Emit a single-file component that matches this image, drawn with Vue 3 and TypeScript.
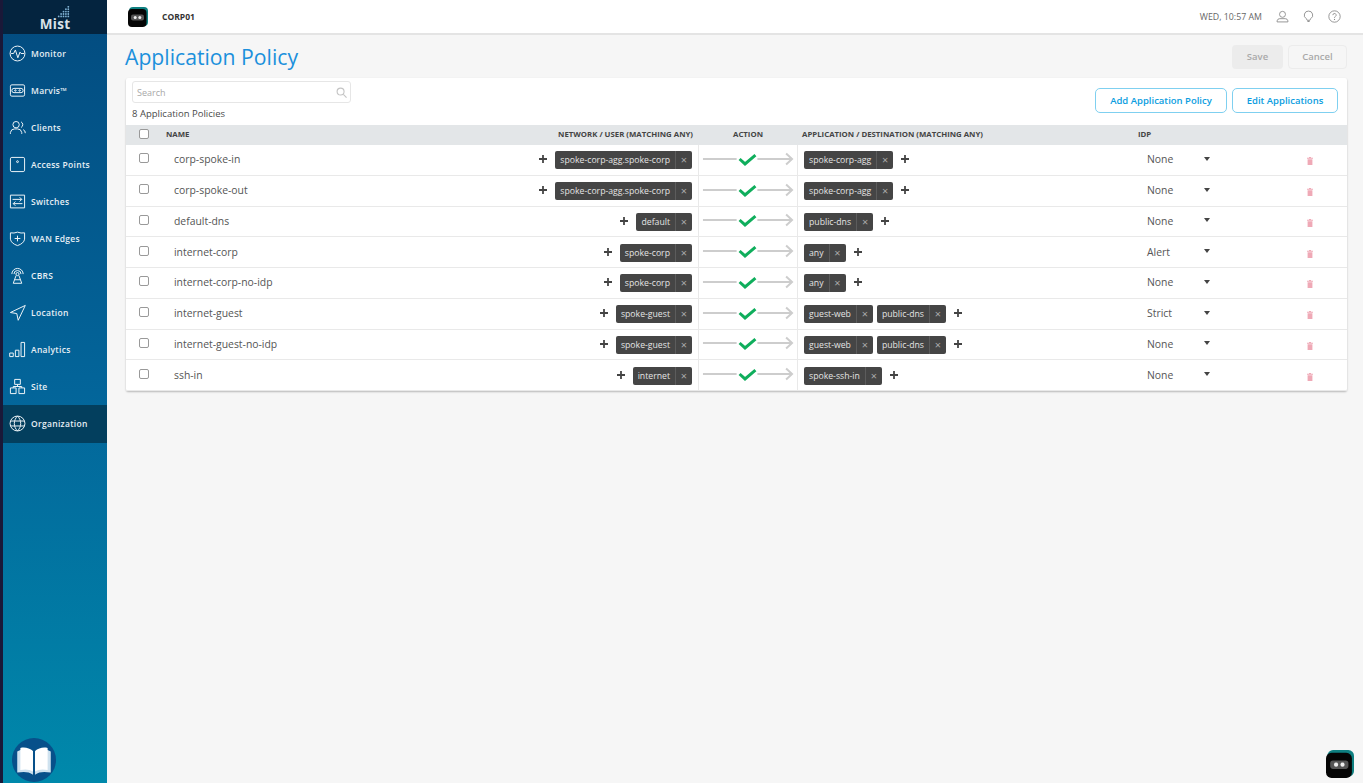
<script setup lang="ts">
interface NavItem { label: string; paths: string[]; active?: boolean }
interface Policy { name: string; net: string[]; app: string[]; idp: string }

const c = (x: number, y: number, r: number) =>
  `M${x - r} ${y}a${r} ${r} 0 1 0 ${2 * r} 0a${r} ${r} 0 1 0 ${-2 * r} 0`

const nav: NavItem[] = [
  { label: 'Monitor', paths: [c(12, 12, 10.5), 'M3 12h3.500l2.500-5 3.500 11 3-8 1.500 2h4.500'] },
  { label: 'Marvis™', paths: ['M4 4h16a2 2 0 0 1 2 2v12a2 2 0 0 1-2 2H4a2 2 0 0 1-2-2V6a2 2 0 0 1 2-2z', 'M7 9h10a3 3 0 0 1 0 6H7a3 3 0 0 1 0-6z', c(9, 12, 1), c(15, 12, 1)] },
  { label: 'Clients', paths: [c(10, 8, 4.5), 'M2 21v-2a6 6 0 0 1 6-5h4a6 6 0 0 1 6 5v2', 'M17 4a4.500 4.500 0 0 1 0 8', 'M20 15a5 5 0 0 1 3 5'] },
  { label: 'Access Points', paths: ['M4 2h16a2 2 0 0 1 2 2v16a2 2 0 0 1-2 2H4a2 2 0 0 1-2-2V4a2 2 0 0 1 2-2z', c(12, 8, 1.3)] },
  { label: 'Switches', paths: ['M2 3h20v18H2z', 'M5 9h13M15 6l3 3-3 3', 'M19 15H6M9 12l-3 3 3 3'] },
  { label: 'WAN Edges', paths: ['M2 4q5 1 10-1 5 2 10 1v9q-1 6-10 9-9-3-10-9z', 'M12 8v8M8 12h8'] },
  { label: 'CBRS', paths: ['M10 12L6 23h12l-4-11', 'M8 18h8', c(12, 10, 2.2), 'M7 10a5 5 0 0 1 10 0', 'M4 10a8 8 0 0 1 16 0'] },
  { label: 'Location', paths: ['M23 2L2 12l9 1.500L13 23z'] },
  { label: 'Analytics', paths: ['M1 17h5v5H1z', 'M9 13h5v9H9z', 'M17 2h5v20h-5z'] },
  { label: 'Site', paths: ['M8 2h8v7H8z', 'M2 14h8v8H2z', 'M14 14h8v8h-8z', 'M12 9v3M6 14v-2h12v2'] },
  { label: 'Organization', active: true, paths: [c(12, 12, 10.5), 'M12 1.500c-6 6-6 15 0 21M12 1.500c6 6 6 15 0 21', 'M2 8.500h20M2 15.500h20'] },
]

const policies: Policy[] = [
  { name: 'corp-spoke-in', net: ['spoke-corp-agg.spoke-corp'], app: ['spoke-corp-agg'], idp: 'None' },
  { name: 'corp-spoke-out', net: ['spoke-corp-agg.spoke-corp'], app: ['spoke-corp-agg'], idp: 'None' },
  { name: 'default-dns', net: ['default'], app: ['public-dns'], idp: 'None' },
  { name: 'internet-corp', net: ['spoke-corp'], app: ['any'], idp: 'Alert' },
  { name: 'internet-corp-no-idp', net: ['spoke-corp'], app: ['any'], idp: 'None' },
  { name: 'internet-guest', net: ['spoke-guest'], app: ['guest-web', 'public-dns'], idp: 'Strict' },
  { name: 'internet-guest-no-idp', net: ['spoke-guest'], app: ['guest-web', 'public-dns'], idp: 'None' },
  { name: 'ssh-in', net: ['internet'], app: ['spoke-ssh-in'], idp: 'None' },
]

const logoDots: [number, number][] = [
  [20, 1], [20, 4], [20, 7], [20, 10], [20, 13],
  [17, 4], [17, 7], [17, 10], [17, 13],
  [14, 7], [14, 10], [14, 13],
  [11, 10], [11, 13], [8, 13],
]
</script>

<template>
  <div class="app">
    <aside class="sidebar">
      <div class="logo">
        <svg class="logo-dots" viewBox="6 0 16 15" aria-hidden="true">
          <circle v-for="(d, i) in logoDots" :key="i" :cx="d[0]" :cy="d[1]" r="1.100" />
        </svg>
        <span class="logo-text">Mist</span>
      </div>
      <nav class="nav">
        <a v-for="item in nav" :key="item.label" class="nav-item" :class="{ active: item.active }">
          <svg class="nav-icon" viewBox="0 0 24 24" aria-hidden="true">
            <path v-for="(p, i) in item.paths" :key="i" :d="p" />
          </svg>
          <span>{{ item.label }}</span>
        </a>
      </nav>
      <div class="book">
        <svg viewBox="0 0 42 42" aria-hidden="true">
          <path class="book-back" d="M5 13v20c6-1 11-1 15 2V13c-4-3-10-3-15 0zM37 13v20c-6-1-11-1-15 2V13c4-3 10-3 15 0z" />
          <path class="book-page" d="M8 9.500v21c5-1 9-.5 12 1.500V12.500c-3-3-8-4-12-3zM34 9.500v21c-5-1-9-.5-12 1.500V12.500c3-3 8-4 12-3z" />
        </svg>
      </div>
    </aside>

    <div class="content">
      <header class="topbar">
        <svg class="robot" viewBox="0 0 20 20" aria-hidden="true">
          <rect x="1" y="0" width="19" height="19" rx="4" fill="#0e7f80" />
          <rect x="0" y="2" width="18.500" height="18" rx="4" fill="#050505" />
          <rect x="3" y="7.500" width="13" height="6" rx="2" fill="#555" />
          <circle cx="7.200" cy="10.500" r="1.500" fill="#eee" />
          <circle cx="11.800" cy="10.500" r="1.500" fill="#eee" />
        </svg>
        <span class="org-name">CORP01</span>
        <span class="clock">WED, 10:57 AM</span>
        <svg class="top-icon first" viewBox="0 0 24 24" aria-hidden="true">
          <circle cx="12" cy="8" r="5.500" />
          <path d="M2 22v-2a5 5 0 0 1 5-4h10a5 5 0 0 1 5 4v2z" />
        </svg>
        <svg class="top-icon" viewBox="0 0 24 24" aria-hidden="true">
          <path d="M12 2a7.500 7.500 0 0 0-4 14l1.500 3h5L16 16a7.500 7.500 0 0 0-4-14z" />
          <path class="fill" d="M10 20h4v2h-4z" />
        </svg>
        <svg class="top-icon" viewBox="0 0 24 24" aria-hidden="true">
          <circle cx="12" cy="12" r="10.500" />
          <path d="M9 9.500a3 3 0 1 1 4.500 2.500c-1 .6-1.500 1.200-1.500 2.500" />
          <path class="fill" d="M11 16.500h2v2h-2z" />
        </svg>
      </header>

      <main class="main">
        <div class="title-row">
          <h1>Application Policy</h1>
          <div class="title-actions">
            <button class="btn-save" type="button">Save</button>
            <button class="btn-cancel" type="button">Cancel</button>
          </div>
        </div>

        <section class="card">
          <div class="toolbar">
            <div class="toolbar-left">
              <div class="search">
                <span>Search</span>
                <svg viewBox="0 0 12 12" aria-hidden="true">
                  <circle cx="5" cy="5" r="3.800" />
                  <path d="M8 8l3.500 3.500" />
                </svg>
              </div>
              <div class="count">8 Application Policies</div>
            </div>
            <div class="toolbar-right">
              <button class="btn-outline add" type="button">Add Application Policy</button>
              <button class="btn-outline edit" type="button">Edit Applications</button>
            </div>
          </div>

          <div class="grid head">
            <div class="cell-check"><span class="checkbox"></span></div>
            <div>NAME</div>
            <div class="head-net">NETWORK / USER (MATCHING ANY)</div>
            <div class="head-action">ACTION</div>
            <div class="head-app">APPLICATION / DESTINATION (MATCHING ANY)</div>
            <div>IDP</div>
          </div>

          <div v-for="p in policies" :key="p.name" class="grid row">
            <div class="cell-check"><span class="checkbox"></span></div>
            <div class="name">{{ p.name }}</div>
            <div class="net">
              <svg class="plus" viewBox="0 0 9 9" aria-hidden="true"><path d="M3.500 0h2v3.500H9v2H5.500V9h-2V5.500H0v-2h3.500z" /></svg>
              <span v-for="t in p.net" :key="t" class="tag"><span class="tag-label">{{ t }}</span><span class="tag-x">×</span></span>
            </div>
            <div class="action">
              <svg viewBox="0 0 100 16" aria-hidden="true">
                <path class="arrow" d="M5 8h34M60 8h34M89 2.500L95 8l-6 5.500" />
                <path class="check" d="M42 8l5.500 5 10.500-9" />
              </svg>
            </div>
            <div class="app-col">
              <span v-for="t in p.app" :key="t" class="tag"><span class="tag-label">{{ t }}</span><span class="tag-x">×</span></span>
              <svg class="plus" viewBox="0 0 9 9" aria-hidden="true"><path d="M3.500 0h2v3.500H9v2H5.500V9h-2V5.500H0v-2h3.500z" /></svg>
            </div>
            <div class="idp">
              <span class="idp-value">{{ p.idp }}</span>
              <span class="caret"></span>
              <svg class="trash" viewBox="0 0 6 8" aria-hidden="true">
                <path d="M0 .800h6v1H0zM.600 2.200h4.800V8H.600zM2 0h2v.800H2z" />
              </svg>
            </div>
          </div>
        </section>
      </main>

      <div class="float-robot">
        <svg viewBox="0 0 20 20" aria-hidden="true">
          <rect x="1" y="0" width="19" height="19" rx="4" fill="#0e7f80" />
          <rect x="0" y="2" width="18.500" height="18" rx="4" fill="#050505" />
          <rect x="3" y="7.500" width="13" height="6" rx="2" fill="#555" />
          <circle cx="7.200" cy="10.500" r="1.500" fill="#eee" />
          <circle cx="11.800" cy="10.500" r="1.500" fill="#eee" />
        </svg>
      </div>
    </div>
  </div>
</template>

<style scoped>
.app {
  display: flex;
  width: 1363px;
  height: 783px;
  overflow: hidden;
  font-family: "Open Sans", "Noto Sans", sans-serif;
  background: #f6f6f6;
  color: #4a4a4a;
}

/* Sidebar */
.sidebar {
  box-sizing: border-box;
  width: 107px;
  height: 783px;
  flex: none;
  display: flex;
  flex-direction: column;
  border-left: 3px solid #1a1838;
  background: linear-gradient(180deg, #034b7f 0%, #03659a 50%, #0089ab 100%);
  color: #e6eff5;
}
.logo {
  height: 34px;
  flex: none;
  background: #04243f;
  display: flex;
  flex-direction: column;
  align-items: center;
  position: relative;
  justify-content: flex-end;
}
.logo-dots {
  position: absolute;
  left: 54px;
  top: 6px;
  width: 13px;
  height: 12px;
  fill: #7fb2d4;
}
.logo-text {
  font-size: 13.500px;
  font-weight: 700;
  line-height: 19px;
  color: #d9e2e8;
  letter-spacing: 0.3px;
}
.nav {
  display: flex;
  flex-direction: column;
  padding-top: 0.500px;
}
.nav-item {
  height: 37.100px;
  display: flex;
  align-items: center;
  gap: 5px;
  padding-left: 6px;
  font-size: 8.500px;
  font-weight: 600;
  letter-spacing: 0.3px;
}
.nav-item.active {
  background: #033f5e;
}
.nav-icon {
  width: 17px;
  height: 17px;
  flex: none;
  fill: none;
  stroke: #eef4f8;
  stroke-width: 1.400;
}
.book {
  margin-top: auto;
  margin-bottom: 1px;
  margin-left: 9px;
  width: 44px;
  height: 44px;
  border-radius: 50%;
  background: #07508a;
}
.book svg {
  display: block;
  width: 44px;
  height: 44px;
}
.book-back {
  fill: #cfe2ef;
}
.book-page {
  fill: #fff;
}

/* Top bar */
.content {
  flex: 1;
  min-width: 0;
  display: flex;
  flex-direction: column;
  position: relative;
}
.topbar {
  box-sizing: border-box;
  height: 35px;
  flex: none;
  display: flex;
  align-items: center;
  padding: 0 22px 0 21px;
  background: #fff;
  border-bottom: 2px solid #e4e4e4;
}
.robot {
  width: 20px;
  height: 20px;
  flex: none;
}
.org-name {
  margin-left: 14px;
  font-size: 8.500px;
  font-weight: 700;
  color: #333;
}
.clock {
  margin-left: auto;
  font-size: 8.800px;
  color: #666;
}
.top-icon {
  width: 13px;
  height: 13px;
  margin-left: 13px;
  fill: none;
  stroke: #888;
  stroke-width: 1.600;
}
.top-icon.first {
  margin-left: 14px;
}
.top-icon .fill {
  fill: #888;
  stroke: none;
}

/* Main */
.main {
  padding: 0 16px 0 19px;
}
.title-row {
  height: 43px;
  display: flex;
  align-items: center;
  justify-content: space-between;
}
h1 {
  margin: 0 0 0 -1px;
  font-size: 21.200px;
  font-weight: 400;
  color: #1b90dc;
  line-height: 30px;
}
.title-actions {
  display: flex;
  gap: 5px;
}
button {
  font-family: inherit;
  cursor: pointer;
}
.btn-save,
.btn-cancel {
  height: 24px;
  font-size: 9.500px;
  font-weight: 600;
  color: #a9a9a9;
  border-radius: 4px;
}
.btn-save {
  width: 51px;
  border: none;
  background: #ececec;
}
.btn-cancel {
  width: 59px;
  border: 1px solid #ececec;
  background: #f6f6f6;
}

.card {
  box-sizing: border-box;
  width: 1221px;
  background: #fff;
  border-radius: 2px;
  box-shadow: 0 1px 2px rgba(0, 0, 0, 0.25);
}
.toolbar {
  height: 47px;
  display: flex;
  justify-content: space-between;
  padding: 3px 9px 0 6px;
  box-sizing: border-box;
}
.search {
  box-sizing: border-box;
  width: 219px;
  height: 22px;
  border: 1px solid #e6e6e6;
  border-radius: 3px;
  display: flex;
  align-items: center;
  justify-content: space-between;
  padding: 0 3px 0 4px;
  font-size: 9px;
  color: #a8a8a8;
}
.search svg {
  width: 11px;
  height: 11px;
  fill: none;
  stroke: #c4c4c4;
  stroke-width: 1.200;
}
.count {
  margin-top: 4px;
  font-size: 9.500px;
  line-height: 13px;
  color: #4a4a4a;
}
.toolbar-right {
  display: flex;
  gap: 5px;
  padding-top: 7px;
}
.btn-outline {
  height: 25px;
  padding: 0;
  background: #fff;
  border: 1px solid #7fd0f0;
  border-radius: 5px;
  color: #0a9de0;
  font-size: 9.500px;
  font-weight: 600;
}
.add {
  width: 132px;
}
.edit {
  width: 106px;
}

/* Table */
.grid {
  display: grid;
  grid-template-columns: 40px 200px 332px 100px 340px 1fr;
  align-items: center;
}
.head {
  box-sizing: border-box;
  height: 20px;
  padding-bottom: 3px;
  background: #e3e6e8;
  font-size: 7.800px;
  font-weight: 700;
  color: #444;
}
.head-net {
  text-align: right;
  padding-right: 5px;
}
.head-action {
  text-align: center;
}
.head-app {
  padding-left: 4px;
}
.row {
  box-sizing: border-box;
  height: 30.750px;
  border-bottom: 1px solid #e9e9e9;
  font-size: 10.400px;
  align-items: stretch;
}
.row > div {
  display: flex;
  align-items: center;
}
.row .cell-check {
  padding-bottom: 3px;
}
.cell-check {
  padding-left: 13px;
}
.checkbox {
  display: block;
  box-sizing: border-box;
  width: 10px;
  height: 10px;
  border: 1px solid #999;
  border-radius: 2px;
  background: #fff;
}
.name {
  padding: 0 0 1px 8px;
  color: #555;
}
.net {
  justify-content: flex-end;
  gap: 8px;
  padding-right: 6px;
  padding-top: 1px;
}
.action {
  border-left: 1px solid #e9e9e9;
  border-right: 1px solid #e9e9e9;
  padding-bottom: 2px;
}
.action svg {
  display: block;
  width: 100px;
  height: 16px;
  margin-left: -1px;
  fill: none;
}
.arrow {
  stroke: #cdcdcd;
  stroke-width: 2;
}
.check {
  stroke: #0fae5c;
  stroke-width: 3;
}
.app-col {
  gap: 4px;
  padding-left: 6px;
  padding-top: 1px;
}
.app-col .plus {
  margin-left: 4px;
}
.plus {
  width: 8px;
  height: 8px;
  flex: none;
  fill: #444;
  margin-bottom: 2px;
}
.tag {
  display: flex;
  align-items: stretch;
  height: 18px;
  background: #454545;
  border-radius: 2px;
  color: #e4e4e4;
  font-size: 8.700px;
  line-height: 18.500px;
}
.tag-label {
  padding: 0 5px;
}
.tag-x {
  width: 16px;
  text-align: center;
  border-left: 1px solid #5c5c5c;
  color: #aaa;
  font-size: 11px;
}
.idp {
  padding-left: 9px;
  padding-bottom: 1px;
}
.idp-value {
  width: 57px;
  color: #555;
}
.caret {
  width: 0;
  height: 0;
  border-left: 3.500px solid transparent;
  border-right: 3.500px solid transparent;
  border-top: 4px solid #444;
  margin-bottom: 1px;
}
.trash {
  width: 6px;
  height: 8px;
  margin-left: 97px;
  margin-top: 4px;
  fill: #efa9b6;
}

.float-robot {
  position: absolute;
  right: 9px;
  bottom: 5px;
  width: 28px;
  height: 28px;
}
.float-robot svg {
  display: block;
  width: 28px;
  height: 28px;
}
</style>

<style>
html,
body {
  margin: 0;
  background: #f6f6f6;
}
</style>
